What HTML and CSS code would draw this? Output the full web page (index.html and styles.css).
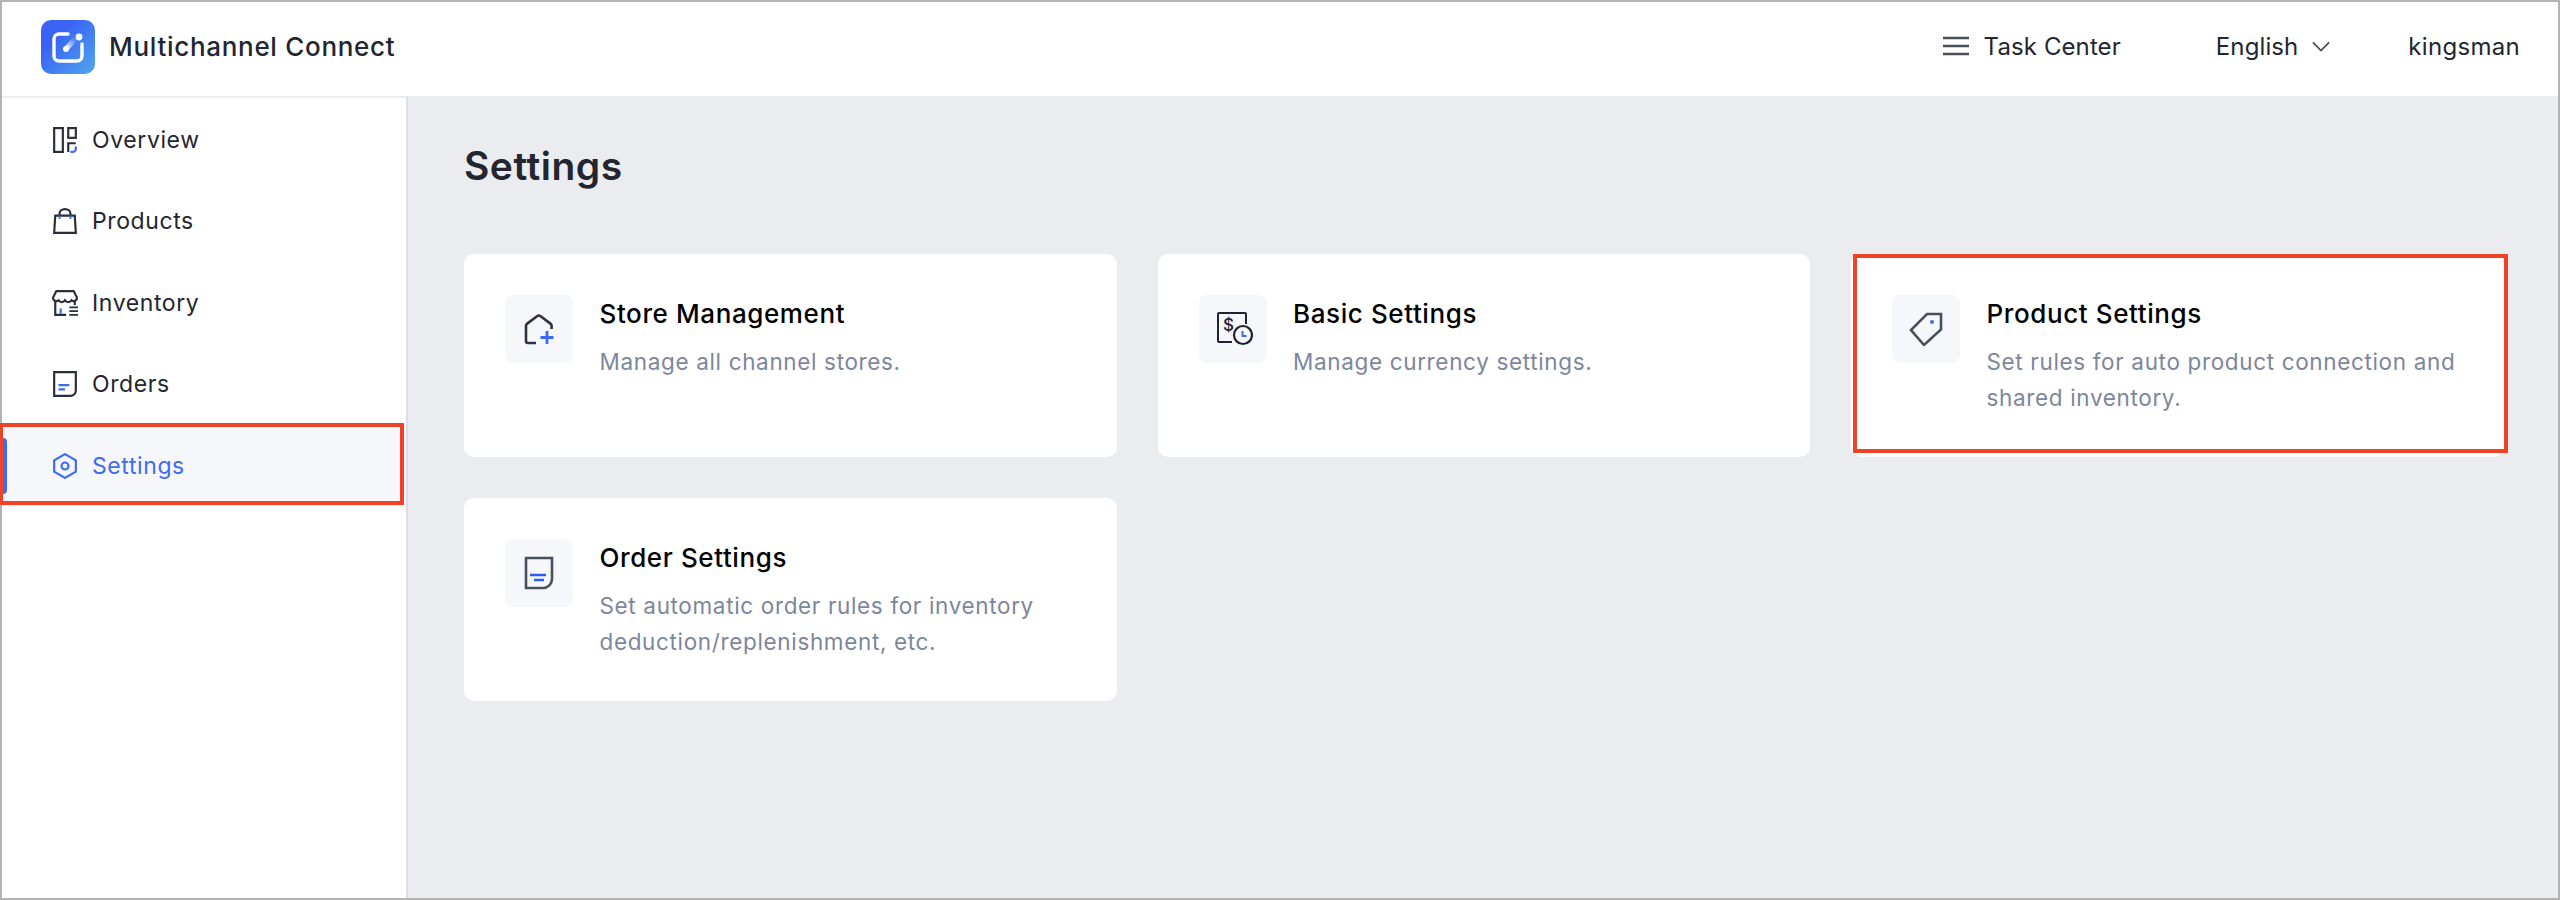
FILE: index.html
```html
<!DOCTYPE html>
<html lang="en">
<head>
<meta charset="utf-8">
<title>Multichannel Connect</title>
<link rel="stylesheet" href="styles.css">
</head>
<body>
<div class="frame">
  <header class="topbar">
    <div class="brand">
      <svg class="logo" viewBox="0 0 54 54">
        <defs>
          <linearGradient id="lg" x1="0" y1="0" x2="1" y2="1"><stop offset="0.3" stop-color="#3a63f5"/><stop offset="1" stop-color="#4fa8ee"/></linearGradient>
          <linearGradient id="lg2" x1="0" y1="1" x2="1" y2="0"><stop offset="0" stop-color="#fff"/><stop offset="1" stop-color="#fff" stop-opacity="0.15"/></linearGradient>
        </defs>
        <rect width="54" height="54" rx="10" fill="url(#lg)"/>
        <path d="M27 14H18a5 5 0 0 0-5 5v17a5 5 0 0 0 5 5h18a5 5 0 0 0 5-5V24" fill="none" stroke="#fff" stroke-width="3.400" stroke-linecap="round"/>
        <path d="M25 29L33 20" stroke="url(#lg2)" stroke-width="5" stroke-linecap="round"/>
        <circle cx="25" cy="29" r="3" fill="#fff"/>
        <circle cx="38" cy="17" r="3.400" fill="#fff"/>
      </svg>
      <span class="brand-name">Multichannel Connect</span>
    </div>
    <div class="top-actions">
      <div class="task">
        <svg class="menu-ico" viewBox="0 0 26 20"><path d="M0 2h26M0 10h26M0 18h26" stroke="#4a4f5c" stroke-width="2.400"/></svg>
        <span>Task Center</span>
      </div>
      <div class="lang">
        <span>English</span>
        <svg class="chev" viewBox="0 0 20 12"><path d="M1 1.500l9 9 9-9" fill="none" stroke="#4a4f5c" stroke-width="2"/></svg>
      </div>
      <span class="user">kingsman</span>
    </div>
  </header>
  <div class="body">
    <nav class="sidebar">
      <a class="nav-item">
        <svg class="nav-ico" viewBox="0 0 24 24"><g fill="none" stroke="#2a2e3a" stroke-width="2"><rect x="2" y="1" width="8" height="22"/><rect x="15" y="1" width="7" height="9"/><path d="M15 23v-8h7"/></g><path d="M22 18v2a3 3 0 0 1-3 3h-2" fill="none" stroke="#3d6bf5" stroke-width="2"/></svg>
        <span>Overview</span>
      </a>
      <a class="nav-item">
        <svg class="nav-ico" viewBox="0 0 24 24"><path d="M3 7h18l1 16H2z" fill="none" stroke="#2a2e3a" stroke-width="2"/><path d="M7 7V5a5 4 0 0 1 10 0v2" fill="none" stroke="#2a2e3a" stroke-width="2"/><path d="M7 7v3M17 7v3" stroke="#3d6bf5" stroke-width="2"/></svg>
        <span>Products</span>
      </a>
      <a class="nav-item">
        <svg class="nav-ico" viewBox="0 0 24 24"><path d="M4 1h16l3 6a3 3 0 0 1-5 2.500 3.500 3.500 0 0 1-6 0 3.500 3.500 0 0 1-6 0A3 3 0 0 1 1 7z" fill="none" stroke="#2a2e3a" stroke-width="2"/><path d="M3 10v13h10" fill="none" stroke="#2a2e3a" stroke-width="2"/><path d="M21 10v4" stroke="#2a2e3a" stroke-width="2"/><path d="M8 17v5" stroke="#3d6bf5" stroke-width="2"/><path d="M16 16h8M16 19.500h8M16 23h8" stroke="#2a2e3a" stroke-width="1.600"/></svg>
        <span>Inventory</span>
      </a>
      <a class="nav-item">
        <svg class="nav-ico" viewBox="0 0 24 24"><path d="M2 1h20v17a5 5 0 0 1-5 5H2z" fill="none" stroke="#2a2e3a" stroke-width="2"/><path d="M6 13h10M6 17h6" stroke="#3d6bf5" stroke-width="2"/></svg>
        <span>Orders</span>
      </a>
      <a class="nav-item active">
        <svg class="nav-ico" viewBox="0 0 24 24"><path d="M12 1l10 5.700v10.600L12 23 2 17.300V6.700z" fill="none" stroke="#3d6bf5" stroke-width="2"/><circle cx="12" cy="12" r="3.200" fill="none" stroke="#3d6bf5" stroke-width="2"/></svg>
        <span>Settings</span>
      </a>
      <div class="mark mark-nav"></div>
    </nav>
    <main class="main">
      <h1 class="page-title">Settings</h1>
      <section class="grid">
        <article class="card">
          <div class="card-ico">
            <svg viewBox="0 0 34 34"><path d="M14 31H6a2 2 0 0 1-2-2V14a3 3 0 0 1 1.200-2.400L15 4.200a3 3 0 0 1 3.600 0l9.800 7.400a3 3 0 0 1 1.200 2.400v3" fill="none" stroke="#2f3340" stroke-width="2.600"/><path d="M25 19v13M18.500 25.500h13" stroke="#3d6bf5" stroke-width="2.800"/></svg>
          </div>
          <div class="card-text">
            <h2>Store Management</h2>
            <p>Manage all channel stores.</p>
          </div>
        </article>
        <article class="card">
          <div class="card-ico">
            <svg class="wide" viewBox="0 0 36 34"><path d="M15 30H2a1 1 0 0 1-1-1V2a1 1 0 0 1 1-1h26a1 1 0 0 1 1 1v10" fill="none" stroke="#1f2230" stroke-width="2"/><circle cx="26" cy="23" r="9" fill="none" stroke="#1f2230" stroke-width="2.200"/><path d="M25.500 19v5h4" fill="none" stroke="#3d6bf5" stroke-width="2"/><text x="6" y="19" class="dollar">$</text></svg>
          </div>
          <div class="card-text">
            <h2>Basic Settings</h2>
            <p>Manage currency settings.</p>
          </div>
        </article>
        <article class="card">
          <div class="card-ico">
            <svg viewBox="0 0 34 34"><path d="M32 2v15.500L15 33 2 18 18 2z" fill="none" stroke="#4a4f5c" stroke-width="2.600"/><circle cx="23" cy="10" r="2" fill="#3d6bf5"/></svg>
          </div>
          <div class="card-text">
            <h2>Product Settings</h2>
            <p>Set rules for auto product connection and shared inventory.</p>
          </div>
          <div class="mark mark-card"></div>
        </article>
        <article class="card">
          <div class="card-ico">
            <svg class="tall" viewBox="0 0 30 34"><path d="M2 2h26v21a9 9 0 0 1-9 9H2z" fill="none" stroke="#4a4f5c" stroke-width="2.600"/><path d="M6 19h16M10 24h10" stroke="#2f5cf5" stroke-width="2.400"/></svg>
          </div>
          <div class="card-text">
            <h2>Order Settings</h2>
            <p>Set automatic order rules for inventory deduction/replenishment, etc.</p>
          </div>
        </article>
      </section>
    </main>
  </div>
</div>
</body>
</html>
```
FILE: styles.css
```css
* { box-sizing: border-box; }
html, body { margin: 0; padding: 0; height: 100%; }
body { font-family: Inter, "Liberation Sans", sans-serif; color: #23262f; overflow: hidden; }
.frame { width: 2560px; height: 900px; border: 2px solid #b3b3b3; display: flex; flex-direction: column; background: #fff; }
.topbar { height: 94px; flex: none; display: flex; align-items: center; justify-content: space-between; padding: 0 38px 0 39px; }
.brand { display: flex; align-items: center; gap: 14px; margin-top: -4px; }
.brand-name { font-size: 26px; font-weight: 500; letter-spacing: 0.7px; margin-top: -2px; }
.logo { width: 54px; height: 54px; display: block; }
.top-actions { display: flex; align-items: center; font-size: 24px; letter-spacing: 0.1px; margin-top: -6px; }
.task { display: flex; align-items: center; gap: 15px; }
.menu-ico { width: 26px; height: 20px; margin-top: -1px; }
.lang { display: flex; align-items: center; gap: 14px; margin-left: 95px; }
.chev { width: 18px; height: 11px; }
.user { margin-left: 78px; letter-spacing: 0.3px; }
.body { flex: 1; display: flex; min-height: 0; }
.sidebar { position: relative; width: 406px; flex: none; border-top: 2px solid #ecedf2; border-right: 2px solid #dcdde8; padding-top: 1px; background: #fff; }
.nav-item { height: 81.500px; display: flex; align-items: center; gap: 14px; padding-left: 50px; font-size: 23px; letter-spacing: 0.6px; color: #23262f; position: relative; }
.nav-ico { width: 26px; height: 26px; flex: none; }
.nav-item.active { background: #f6f7fb; color: #3d6bf5; }
.nav-item.active::before { content: ""; position: absolute; left: 0; top: 13px; bottom: 13px; width: 5px; background: #3d6bf5; border-radius: 0 4px 4px 0; }
.main { flex: 1; background: #ebecf0; padding: 0 53px 0 56px; min-width: 0; }
.page-title { margin: 47px 0 0; height: 65px; font-size: 39px; line-height: 46px; font-weight: 600; letter-spacing: 0.5px; color: #23262f; }
.grid { display: grid; grid-template-columns: repeat(3, 652.500px); grid-auto-rows: 203px; gap: 41px; margin-top: 46px; }
.card { position: relative; background: #fff; border-radius: 10px; padding: 41px; display: flex; gap: 26.500px; }
.card-ico { width: 68px; height: 68px; flex: none; background: #f6f7fb; border-radius: 8px; display: flex; align-items: center; justify-content: center; }
.card-ico svg { width: 34px; height: 34px; display: block; }
.card-ico svg.wide { width: 36px; margin-left: 4px; }
.card-ico svg.tall { width: 30px; }
.dollar { font-family: Inter, sans-serif; font-size: 17px; font-weight: 500; fill: #1f2230; }
.card-text { padding-top: 1px; }
.card-text h2 { margin: 0; font-size: 26px; line-height: 36px; font-weight: 500; letter-spacing: 0.6px; color: #000; }
.card-text p { margin: 12px 0 0; font-size: 22.500px; line-height: 36px; color: #7d869c; letter-spacing: 0.65px; }
.mark { position: absolute; border: 4px solid #f04325; pointer-events: none; }
.mark-nav { left: -2px; top: 325px; width: 404px; height: 82px; border-left-width: 3px; }
.mark-card { left: 2px; top: 0; width: 655px; height: 199px; }
```
